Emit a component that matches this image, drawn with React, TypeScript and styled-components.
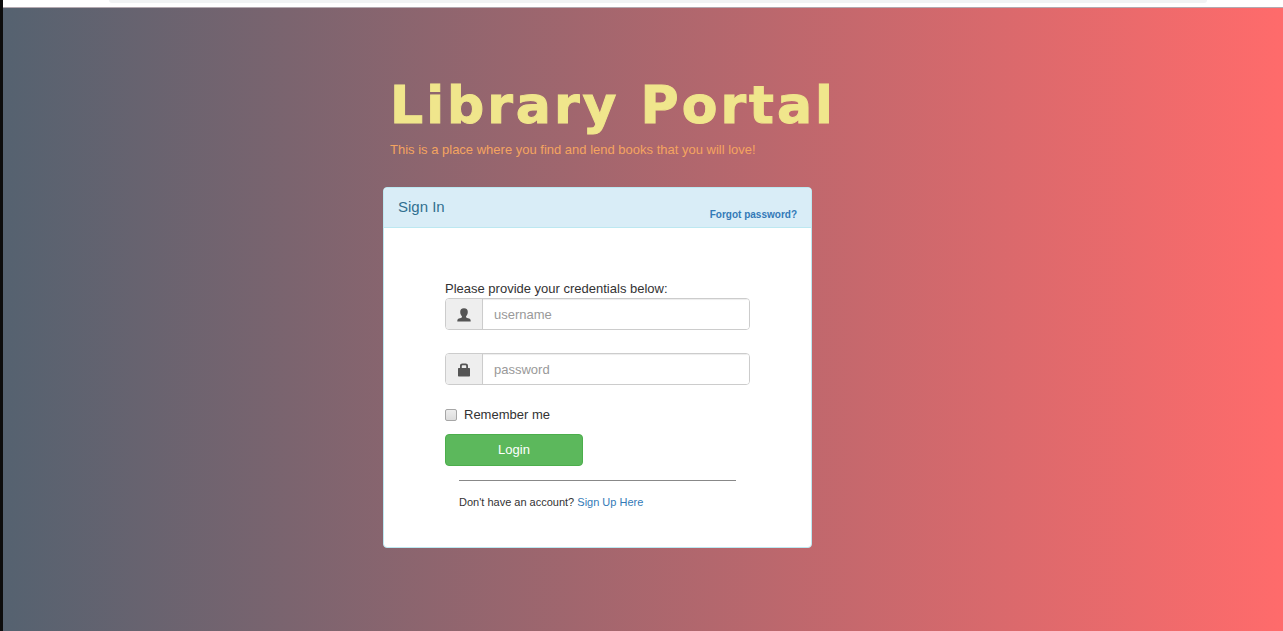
import React from "react";
import styled, { createGlobalStyle } from "styled-components";

const GlobalStyle = createGlobalStyle`
  *, *::before, *::after { box-sizing: border-box; }
  body {
    margin: 0;
    background: #fff;
    color: #333;
    font: 13px/18px "Liberation Sans", Arial, sans-serif;
  }
`;

const Frame = styled.div`
  min-height: 100vh;
  display: flex;
  flex-direction: column;
  border-left: 3px solid #0d0d0d;
`;

const BrowserEdge = styled.div`
  height: 8px;
  padding: 0 76px 0 106px;
  border-bottom: 1px solid #b3a9b0;
  background: #fff;
`;

const AddressBar = styled.div`
  height: 3px;
  border-radius: 0 0 8px 8px;
  background: #f1f3f4;
`;

const Page = styled.main`
  flex: 1;
  padding: 68px 0 80px;
  background: linear-gradient(to right, #556270, #ff6b6b);
`;

const Column = styled.div`
  width: 429px;
  max-width: 100%;
  margin-left: max(0px, calc(50% - 260px));
`;

const Heading = styled.header`
  padding-left: 7px;
  margin-bottom: 28px;
  white-space: nowrap;
`;

const Title = styled.h1`
  margin: 0 0 7px;
  color: #f0e68c;
  font: 700 52px/58px "DejaVu Sans", "Arial Black", sans-serif;
  letter-spacing: 3px;
  -webkit-text-stroke: 1px #f0e68c;
`;

const Tagline = styled.p`
  margin: 0;
  color: #f4a460;
`;

const Panel = styled.section`
  border: 1px solid #bce8f1;
  border-radius: 4px;
  background: #fff;
  overflow: hidden;
`;

const PanelHeader = styled.div`
  display: flex;
  justify-content: space-between;
  align-items: flex-end;
  height: 40px;
  padding: 0 14px 3px;
  border-bottom: 1px solid #bce8f1;
  background: #d9edf7;
`;

const PanelTitle = styled.h2`
  margin: 0;
  padding-bottom: 8px;
  color: #31708f;
  font-size: 15px;
  font-weight: 400;
`;

const Link = styled.a`
  color: #337ab7;
  text-decoration: none;
  &:hover { text-decoration: underline; }
`;

const ForgotLink = styled(Link)`
  font-size: 10px;
  font-weight: 700;
`;

const Form = styled.form`
  display: flex;
  flex-direction: column;
  padding: 52px 61px 36px;
`;

const Intro = styled.p`
  margin: 0;
`;

const Fields = styled.div`
  display: grid;
  gap: 23px;
  margin-bottom: 21px;
`;

const InputGroup = styled.label`
  display: flex;
  height: 32px;
  border: 1px solid #ccc;
  border-radius: 4px;
  overflow: hidden;
`;

const Addon = styled.span`
  display: flex;
  align-items: center;
  justify-content: center;
  width: 37px;
  padding-top: 2px;
  border-right: 1px solid #ccc;
  background: #eee;
  color: #555;
`;

const TextInput = styled.input`
  flex: 1;
  min-width: 0;
  padding: 1px 11px 0;
  border: 0;
  background: #fff;
  color: #555;
  font: inherit;
  box-shadow: inset 0 1px 1px rgba(0, 0, 0, 0.075);
  &::placeholder { color: #999; opacity: 1; }
`;

const Remember = styled.label`
  display: flex;
  align-items: center;
  align-self: flex-start;
  gap: 7px;
  margin-bottom: 10px;
`;

const Checkbox = styled.input`
  appearance: none;
  width: 12px;
  height: 12px;
  margin: 0;
  border: 1px solid #a6a6a6;
  border-radius: 2px;
  background: linear-gradient(#ededed, #dcdcdc);
  &:checked { background: #337ab7; }
`;

const LoginButton = styled.button`
  width: 138px;
  height: 32px;
  border: 1px solid #4cae4c;
  border-radius: 4px;
  background: #5cb85c;
  color: #fff;
  font: inherit;
  cursor: pointer;
`;

const SignUp = styled.p`
  margin: 14px 14px 0;
  padding-top: 12px;
  border-top: 1px solid #888;
  font-size: 11px;
`;

const UserIcon = () => (
  <svg width="14" height="14" viewBox="0 0 14 14" fill="currentColor" aria-hidden="true">
    <path d="M7 0.3C4.4 0.3 3.1 1.7 3.2 4C3.3 6 4 7.4 5 8.4V9.3C4.5 10 1.6 10.4 0.8 11.2C0.4 11.6 0.3 12.4 0.3 13.4H13.7C13.7 12.4 13.6 11.6 13.2 11.2C12.4 10.4 9.5 10 9 9.3V8.4C10 7.4 10.7 6 10.8 4C10.9 1.7 9.6 0.3 7 0.3Z" />
  </svg>
);

const LockIcon = () => (
  <svg width="14" height="14" viewBox="0 0 14 14" fill="currentColor" aria-hidden="true">
    <path
      fillRule="evenodd"
      d="M3 5V2.8C3 1.3 4 0.5 5.4 0.5H8.6C10 0.5 11 1.3 11 2.8V5H12.3C12.8 5 13 5.2 13 5.7V12.8C13 13.3 12.8 13.5 12.3 13.5H1.7C1.2 13.5 1 13.3 1 12.8V5.7C1 5.2 1.2 5 1.7 5ZM4.8 5H9.2V3.2C9.2 2.5 8.8 2.2 8.2 2.2H5.8C5.2 2.2 4.8 2.5 4.8 3.2Z"
    />
  </svg>
);

export default function App() {
  return (
    <>
      <GlobalStyle />
      <Frame>
        <BrowserEdge>
          <AddressBar />
        </BrowserEdge>
        <Page>
          <Column>
            <Heading>
              <Title>Library Portal</Title>
              <Tagline>This is a place where you find and lend books that you will love!</Tagline>
            </Heading>
            <Panel>
              <PanelHeader>
                <PanelTitle>Sign In</PanelTitle>
                <ForgotLink href="#forgot">Forgot password?</ForgotLink>
              </PanelHeader>
              <Form onSubmit={(e) => e.preventDefault()}>
                <Intro>Please provide your credentials below:</Intro>
                <Fields>
                  <InputGroup>
                    <Addon><UserIcon /></Addon>
                    <TextInput type="text" name="username" placeholder="username" aria-label="username" />
                  </InputGroup>
                  <InputGroup>
                    <Addon><LockIcon /></Addon>
                    <TextInput type="password" name="password" placeholder="password" aria-label="password" />
                  </InputGroup>
                </Fields>
                <Remember>
                  <Checkbox type="checkbox" name="remember" />
                  Remember me
                </Remember>
                <LoginButton type="submit">Login</LoginButton>
                <SignUp>
                  Don't have an account? <Link href="#signup">Sign Up Here</Link>
                </SignUp>
              </Form>
            </Panel>
          </Column>
        </Page>
      </Frame>
    </>
  );
}
